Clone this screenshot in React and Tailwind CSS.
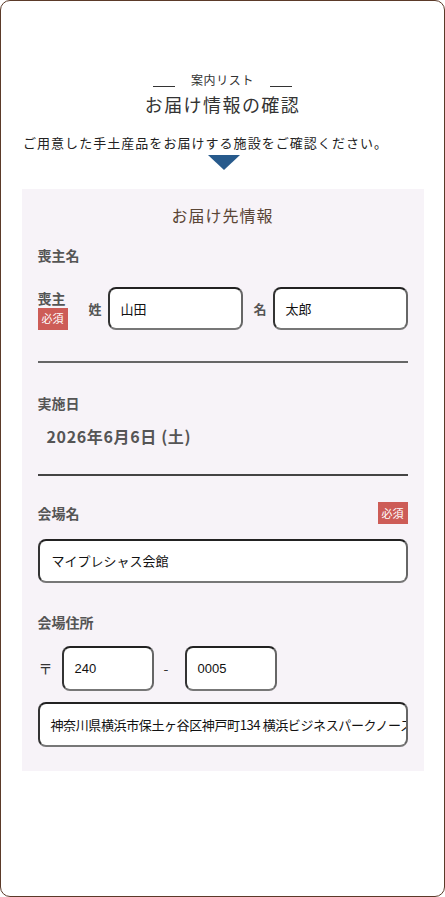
export default function App() {
  const font = { fontFamily: "'Noto Sans CJK JP', 'Noto Sans', sans-serif" }

  const Badge = () => (
    <span className="inline-flex items-center justify-center w-[30px] h-[22px] bg-[#cd5c57] text-white text-[11px] leading-none">
      必須
    </span>
  )

  const box = 'bg-white rounded-[8px] border-2 border-t-[#222] border-l-[#333] border-r-[#666] border-b-[#777] flex items-center text-[13px] text-[#111]'

  return (
    <div
      className="w-[445px] h-[897px] bg-white border border-[#5b3a29] rounded-[10px] flex flex-col items-center"
      style={font}
    >
      {/* Heading */}
      <div className="mt-[70px] flex items-end gap-[14px] h-[18px]">
        <span className="w-[22px] h-px bg-[#333] mb-[2px]" />
        <span className="text-[12px] leading-[18px] text-[#333] tracking-[0.05em] px-[2px]">案内リスト</span>
        <span className="w-[22px] h-px bg-[#333] mb-[2px]" />
      </div>
      <h1 className="mt-[2px] text-[18px] leading-[26px] text-[#333] tracking-[0.08em]">お届け情報の確認</h1>

      <p className="mt-[16px] w-full pl-[22px] text-[13px] leading-[20px] text-[#222] tracking-[0.08em] whitespace-nowrap">
        ご用意した手土産品をお届けする施設をご確認ください。
      </p>
      <svg width="32" height="15" viewBox="0 0 32 15" className="mt-[2px] ml-[2px]">
        <polygon points="0,0 32,0 16,15" fill="#275a8c" />
      </svg>

      {/* Panel */}
      <div className="mt-[19px] w-[402px] h-[582px] bg-[#f7f3f8] px-[16px]">
        <h2 className="mt-[14px] text-center text-[16px] leading-[24px] text-[#5a4536] tracking-[0.06em]">お届け先情報</h2>

        <div className="mt-[18px] text-[14px] leading-[20px] font-bold text-[#555]">喪主名</div>

        <div className="mt-[22px] flex items-center">
          <div className="flex flex-col w-[30px]">
            <span className="text-[14px] leading-[20px] font-bold text-[#555]">喪主</span>
            <Badge />
          </div>
          <span className="ml-[21px] text-[13px] font-bold text-[#555]">姓</span>
          <div className={`ml-[6px] w-[135px] h-[43px] pl-[11px] ${box}`}>山田</div>
          <span className="ml-[11px] text-[13px] font-bold text-[#555]">名</span>
          <div className={`ml-[6px] w-[135px] h-[43px] pl-[11px] ${box}`}>太郎</div>
        </div>

        <div className="mt-[31px] h-[2px] bg-[#666]" />

        <div className="mt-[30px] text-[14px] leading-[20px] font-bold text-[#555]">実施日</div>
        <div className="mt-[12px] pl-[9px] text-[16px] leading-[22px] font-semibold text-[#555] tracking-[0.04em]">
          2026年6月6日 (土)
        </div>

        <div className="mt-[27px] h-[2px] bg-[#444]" />

        <div className="mt-[26px] flex items-center justify-between">
          <span className="text-[14px] leading-[20px] font-bold text-[#555]">会場名</span>
          <Badge />
        </div>
        <div className={`mt-[15px] h-[44px] pl-[12px] ${box}`}>マイプレシャス会館</div>

        <div className="mt-[29px] text-[14px] leading-[20px] font-bold text-[#555]">会場住所</div>

        <div className="mt-[14px] flex items-center">
          <span className="ml-[1px] text-[14px] text-[#333]">〒</span>
          <div className={`ml-[9px] w-[92px] h-[45px] pl-[11px] ${box}`} style={{ fontFamily: "'Liberation Sans', Arial, sans-serif" }}>
            240
          </div>
          <span className="ml-[10px] w-[21px] text-[14px] text-[#333]">-</span>
          <div className={`w-[92px] h-[45px] pl-[11px] ${box}`} style={{ fontFamily: "'Liberation Sans', Arial, sans-serif" }}>
            0005
          </div>
        </div>

        <div className={`mt-[11px] h-[45px] pl-[11px] pr-[2px] overflow-hidden whitespace-nowrap tracking-[-0.03em] ${box}`}>
          <span className="whitespace-nowrap">神奈川県横浜市保土ヶ谷区神戸町134 横浜ビジネスパークノース</span>
        </div>
      </div>
    </div>
  )
}
